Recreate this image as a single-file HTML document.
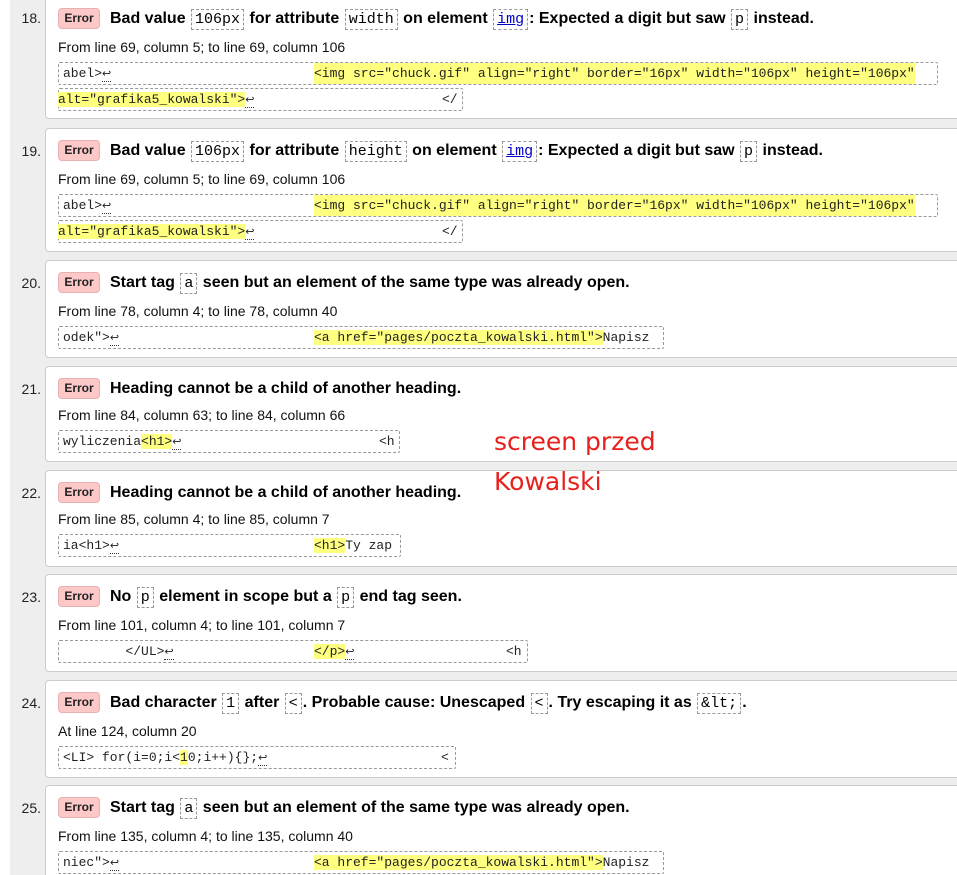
<!DOCTYPE html>
<html><head><meta charset="utf-8"><style>
html,body{margin:0;width:957px;height:875px;overflow:hidden}
body{background:#fff;font-family:"Liberation Sans",Arial,sans-serif;position:relative}
.strip{position:absolute;left:10px;top:0;width:947px;height:875px;background:#eee}
.card{position:absolute;left:45px;width:940px;background:#fff;border:1px solid #ccc;border-radius:4px}
.num{position:absolute;left:0;width:41px;text-align:right;font-size:14px;color:#222}
.t{position:absolute;left:58px;white-space:nowrap;font-size:16px;font-weight:bold;color:#000;line-height:24px}
.badge{display:inline-block;width:40px;height:19px;line-height:19px;text-align:center;background:#fcc8c8;border:1px solid #e8b0b0;border-radius:4px;font-size:12px;font-weight:bold;color:#222;margin-right:10px;vertical-align:1px}
.t code{font-family:"Liberation Mono",monospace;font-weight:normal;font-size:15px;border:1px dashed #999;padding:1px 3px;margin:0 1px}
.t code a{color:#00c}
.loc{position:absolute;left:58px;font-size:14px;color:#111;white-space:nowrap}
.cb{position:absolute;left:58px;height:21px;border:1px dashed #999;border-radius:2px;font-family:"Liberation Mono",monospace;font-size:13px;line-height:21px;white-space:pre;color:#222}
.cb > span{position:absolute;top:0}
.hl{background:#ffff80}
.rt{font-size:11px;border-bottom:1px dotted #333;line-height:12px}
.hand{position:absolute;left:494px;color:#e8201c;font-family:"DejaVu Sans",sans-serif;font-size:25px;white-space:nowrap}
</style></head><body>
<div class="strip"></div>

<div class="card" style="top:-6px;height:123px"></div>
<div class="card" style="top:128px;height:122px"></div>
<div class="card" style="top:260px;height:96px"></div>
<div class="card" style="top:366px;height:94px"></div>
<div class="card" style="top:470px;height:95px"></div>
<div class="card" style="top:574px;height:96px"></div>
<div class="card" style="top:680px;height:96px"></div>
<div class="card" style="top:785px;height:100px"></div>

<!-- 18 -->
<div class="num" style="top:10px">18.</div>
<div class="t" style="top:7px"><span class="badge">Error</span>Bad value <code>106px</code> for attribute <code>width</code> on element <code><a href="#">img</a></code>: Expected a digit but saw <code>p</code> instead.</div>
<div class="loc" style="top:39px">From line 69, column 5; to line 69, column 106</div>
<div class="cb" style="top:62px;width:878px"><span style="left:4px">abel&gt;<span class="rt">↩</span></span><span class="hl" style="left:255px">&lt;img src="chuck.gif" align="right" border="16px" width="106px" height="106px"</span></div>
<div class="cb" style="top:88px;width:403px"><span style="left:-1px"><span class="hl">alt="grafika5_kowalski"&gt;</span><span class="rt">↩</span></span><span style="left:383px">&lt;/</span></div>

<!-- 19 -->
<div class="num" style="top:143px">19.</div>
<div class="t" style="top:139px"><span class="badge">Error</span>Bad value <code>106px</code> for attribute <code>height</code> on element <code><a href="#">img</a></code>: Expected a digit but saw <code>p</code> instead.</div>
<div class="loc" style="top:171px">From line 69, column 5; to line 69, column 106</div>
<div class="cb" style="top:194px;width:878px"><span style="left:4px">abel&gt;<span class="rt">↩</span></span><span class="hl" style="left:255px">&lt;img src="chuck.gif" align="right" border="16px" width="106px" height="106px"</span></div>
<div class="cb" style="top:220px;width:403px"><span style="left:-1px"><span class="hl">alt="grafika5_kowalski"&gt;</span><span class="rt">↩</span></span><span style="left:383px">&lt;/</span></div>

<!-- 20 -->
<div class="num" style="top:275px">20.</div>
<div class="t" style="top:271px"><span class="badge">Error</span>Start tag <code>a</code> seen but an element of the same type was already open.</div>
<div class="loc" style="top:303px">From line 78, column 4; to line 78, column 40</div>
<div class="cb" style="top:326px;width:604px"><span style="left:4px">odek"&gt;<span class="rt">↩</span></span><span style="left:255px"><span class="hl">&lt;a href="pages/poczta_kowalski.html"&gt;</span>Napisz</span></div>

<!-- 21 -->
<div class="num" style="top:381px">21.</div>
<div class="t" style="top:377px"><span class="badge">Error</span>Heading cannot be a child of another heading.</div>
<div class="loc" style="top:407px">From line 84, column 63; to line 84, column 66</div>
<div class="cb" style="top:430px;width:340px"><span style="left:4px">wyliczenia<span class="hl">&lt;h1&gt;</span><span class="rt">↩</span></span><span style="left:320px">&lt;h</span></div>

<!-- 22 -->
<div class="num" style="top:485px">22.</div>
<div class="t" style="top:481px"><span class="badge">Error</span>Heading cannot be a child of another heading.</div>
<div class="loc" style="top:511px">From line 85, column 4; to line 85, column 7</div>
<div class="cb" style="top:534px;width:341px"><span style="left:4px">ia&lt;h1&gt;<span class="rt">↩</span></span><span style="left:255px"><span class="hl">&lt;h1&gt;</span>Ty zap</span></div>

<!-- 23 -->
<div class="num" style="top:589px">23.</div>
<div class="t" style="top:585px"><span class="badge">Error</span>No <code>p</code> element in scope but a <code>p</code> end tag seen.</div>
<div class="loc" style="top:617px">From line 101, column 4; to line 101, column 7</div>
<div class="cb" style="top:640px;width:468px"><span style="left:4px">        &lt;/UL&gt;<span class="rt">↩</span></span><span style="left:255px"><span class="hl">&lt;/p&gt;</span><span class="rt">↩</span></span><span style="left:447px">&lt;h</span></div>

<!-- 24 -->
<div class="num" style="top:695px">24.</div>
<div class="t" style="top:691px"><span class="badge">Error</span>Bad character <code>1</code> after <code>&lt;</code>. Probable cause: Unescaped <code>&lt;</code>. Try escaping it as <code>&amp;lt;</code>.</div>
<div class="loc" style="top:723px">At line 124, column 20</div>
<div class="cb" style="top:746px;width:396px"><span style="left:4px">&lt;LI&gt; for(i=0;i&lt;<span class="hl">1</span>0;i++){};<span class="rt">↩</span></span><span style="left:382px">&lt;</span></div>

<!-- 25 -->
<div class="num" style="top:800px">25.</div>
<div class="t" style="top:796px"><span class="badge">Error</span>Start tag <code>a</code> seen but an element of the same type was already open.</div>
<div class="loc" style="top:828px">From line 135, column 4; to line 135, column 40</div>
<div class="cb" style="top:851px;width:604px"><span style="left:4px">niec"&gt;<span class="rt">↩</span></span><span style="left:255px"><span class="hl">&lt;a href="pages/poczta_kowalski.html"&gt;</span>Napisz</span></div>

<div class="hand" style="top:427px">screen przed</div>
<div class="hand" style="top:467px">Kowalski</div>
</body></html>
